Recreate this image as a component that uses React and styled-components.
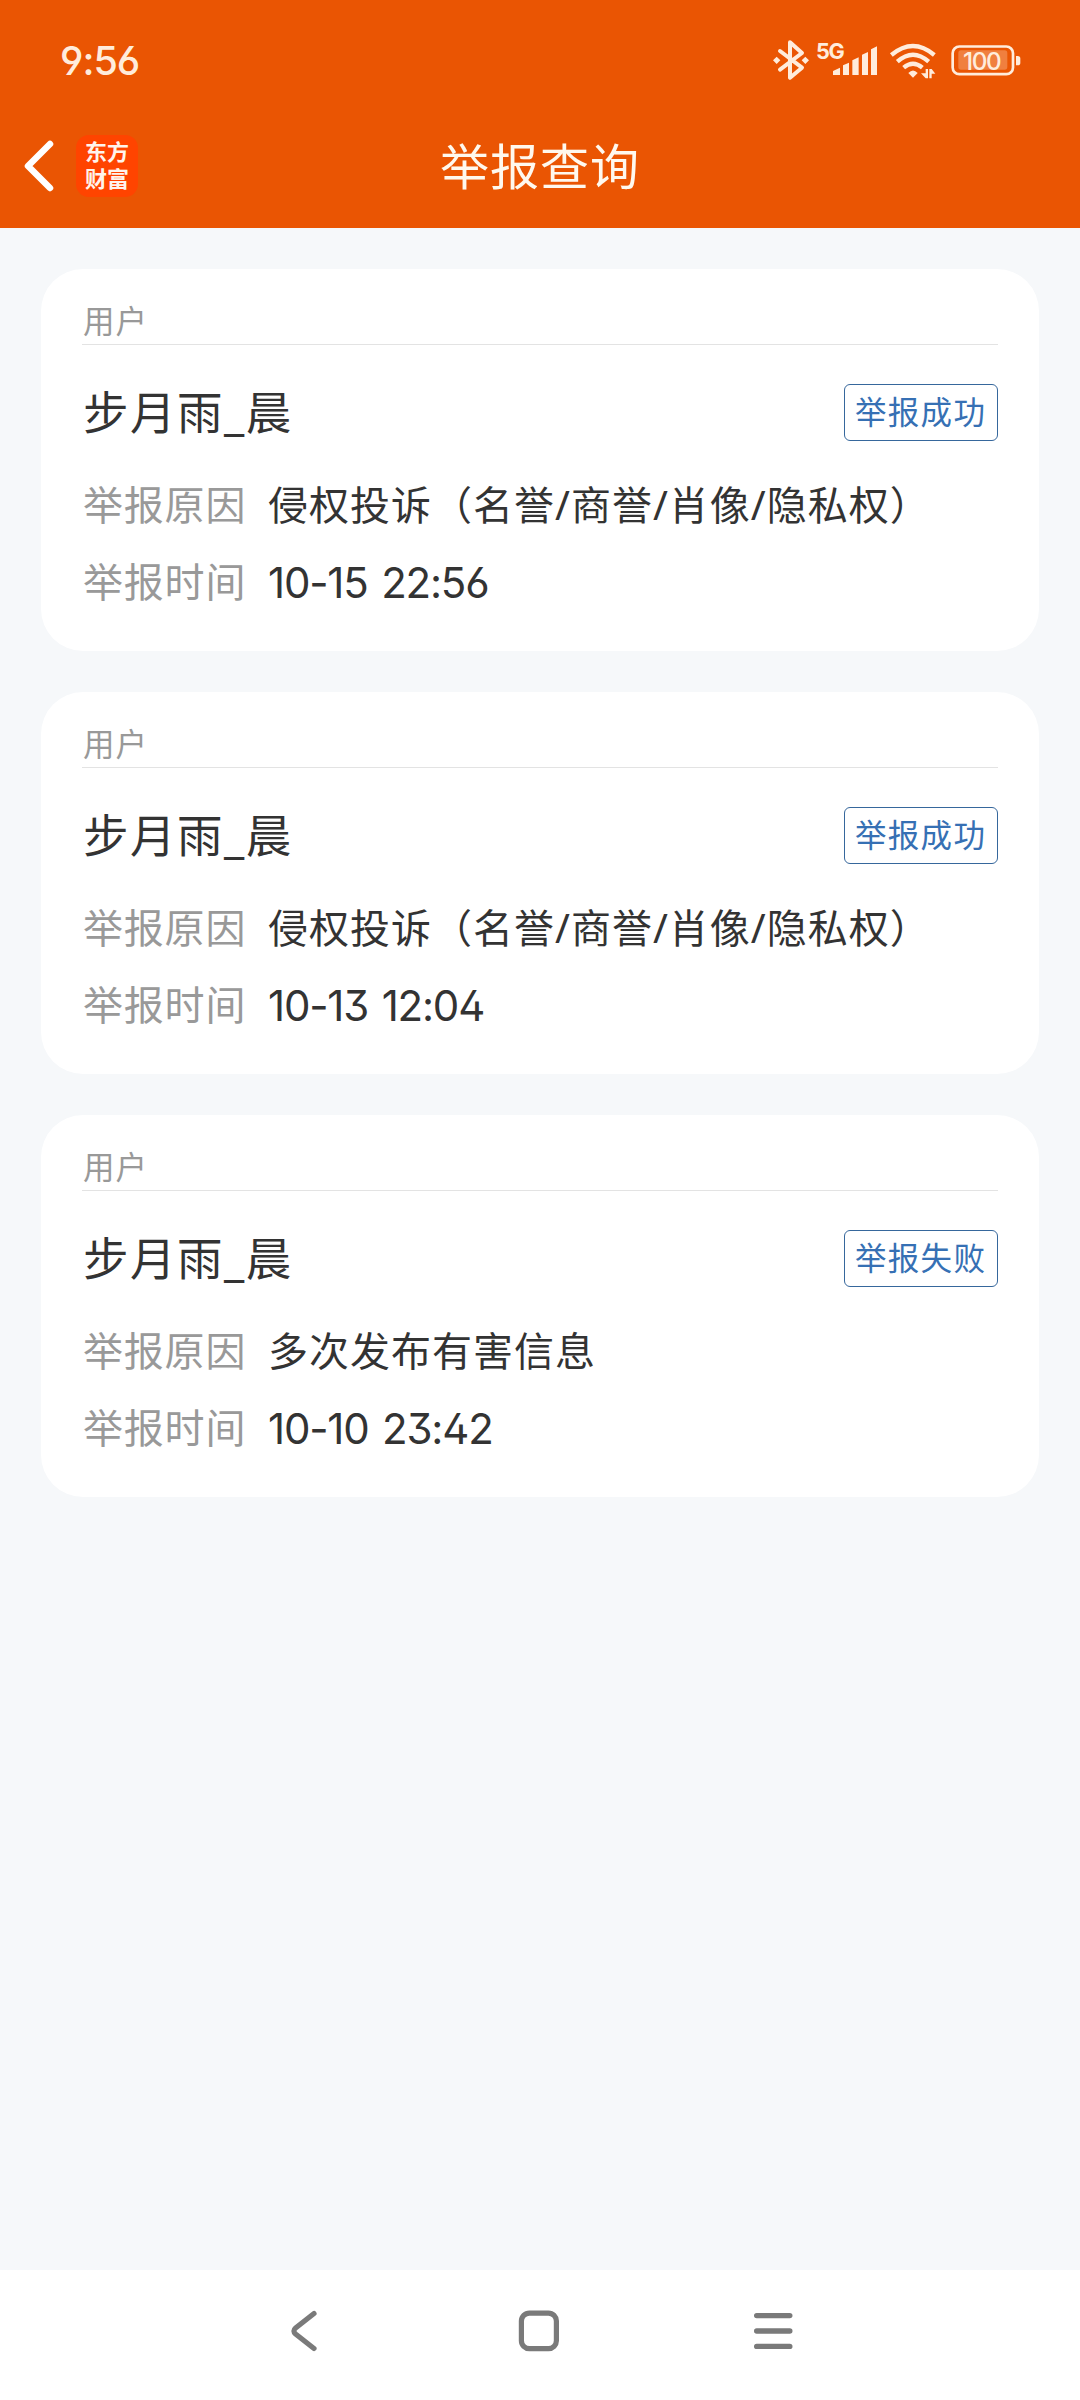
import styled, { createGlobalStyle } from "styled-components";

const GlobalStyle = createGlobalStyle`
  * {
    box-sizing: border-box;
  }
  body {
    margin: 0;
    background: #f6f8fa;
    font-family: "Noto Sans", "Noto Sans CJK SC", sans-serif;
  }
`;

const Page = styled.div`
  display: flex;
  flex-direction: column;
  width: 1080px;
  height: 2400px;
  background: #f6f8fa;
`;

const Header = styled.header`
  background: #ea5503;
  color: #fff8ee;
`;

const StatusBar = styled.div`
  display: flex;
  align-items: center;
  height: 104px;
  padding: 16px 58px 0 60px;
  color: #ffecdc;
`;

const Clock = styled.span`
  padding-top: 1px;
  font-family: Inter, sans-serif;
  font-size: 39.5px;
  font-weight: 500;
  font-feature-settings: "ss01";
  line-height: 48px;
  letter-spacing: -1px;
`;

const StatusIcons = styled.div`
  display: flex;
  align-items: center;
  margin-left: auto;
  height: 50px;

  svg {
    display: block;
    overflow: visible;
  }
`;

const TitleBar = styled.div`
  display: grid;
  grid-template-columns: 1fr auto 1fr;
  align-items: center;
  height: 124px;
  padding: 0 23px;
`;

const TitleLeft = styled.div`
  display: flex;
  align-items: center;
  gap: 21px;
`;

const Title = styled.h1`
  margin: 0;
  padding-bottom: 4px;
  font-family: "Noto Sans CJK SC", sans-serif;
  font-size: 49px;
  font-weight: 400;
  line-height: 60px;
  letter-spacing: 1px;
`;

const Logo = styled.div`
  display: flex;
  flex-direction: column;
  align-items: center;
  justify-content: center;
  width: 62px;
  height: 62px;
  padding-bottom: 5px;
  border-radius: 13px;
  background: #ff4400;
  color: #fff4ec;
  font-family: "Noto Sans CJK SC", sans-serif;
  font-size: 22px;
  font-weight: 700;
  line-height: 27px;
`;

const List = styled.main`
  display: flex;
  flex: 1;
  flex-direction: column;
  gap: 41px;
  padding: 41px;
`;

const Card = styled.section`
  height: 382px;
  padding: 31px 41px 0;
  border-radius: 42px;
  background: #fff;
`;

const CardType = styled.div`
  height: 45px;
  padding: 1px 0 0 1px;
  border-bottom: 1px solid #e3e3e3;
  color: #999;
  font-size: 31.5px;
  line-height: 40px;
  letter-spacing: 1px;
`;

const CardHead = styled.div`
  display: flex;
  align-items: center;
  justify-content: space-between;
  height: 57px;
  margin: 39px 0 34px;
`;

const UserName = styled.span`
  padding-left: 1px;
  color: #333;
  font-size: 45.5px;
  line-height: 57px;
  letter-spacing: 1.5px;
`;

const Badge = styled.span`
  width: 154px;
  height: 57px;
  padding-left: 10px;
  border: 1px solid #36679c;
  border-radius: 6px;
  color: #3670b4;
  font-size: 31.5px;
  line-height: 54px;
  letter-spacing: 1.3px;
  white-space: nowrap;
`;

const Row = styled.div`
  display: flex;
  align-items: center;
  height: 60px;
  margin-bottom: 17px;
  font-size: 40px;
  line-height: 60px;
  letter-spacing: 1px;
  white-space: nowrap;
`;

const Label = styled.span`
  width: 186px;
  padding-left: 1px;
  color: #999;
  letter-spacing: 0.8px;
`;

const Reason = styled.span`
  color: #333;
`;

const Time = styled.span`
  padding-top: 2px;
  color: #333;
  font-family: Inter, sans-serif;
  font-size: 42px;
  font-feature-settings: "ss01";
  letter-spacing: -1.2px;
  word-spacing: 3px;
`;

const NavBar = styled.nav`
  display: flex;
  align-items: flex-start;
  justify-content: space-between;
  height: 130px;
  padding: 38px 285px 0 289px;
  background: #fff;
`;

const BluetoothIcon = () => (
  <svg width="38" height="42" viewBox="66 56 114 126" fill="none" stroke="currentColor">
    <path
      d="M90 92 L156 142 L120 172 V66 L156 98 L90 148"
      strokeWidth="12"
      strokeLinecap="round"
      strokeLinejoin="round"
    />
    <path d="M80 109 L91 120 L80 131 L69 120Z M166 109 L177 120 L166 131 L155 120Z" fill="currentColor" stroke="none" />
  </svg>
);

const SignalIcon = styled(({ className }) => (
  <svg className={className} width="64" height="42" viewBox="195 56 192 126" fill="currentColor">
    <text x="198" y="115" fontFamily="Inter" fontSize="65" fontWeight="700" letterSpacing="-4">
      5G
    </text>
    <path d="M249 152 L270 142 V164 H249Z M279 135 L297 127 V164 H279Z M307 120 L326 111 V164 H307Z M336 103 L354 95 V164 H336Z M363 87 L381 78 V164 H363Z" />
  </svg>
))`
  margin: 0 10px 0 5px;
`;

const WifiIcon = () => (
  <svg width="48" height="42" viewBox="417 56 144 126" fill="none" stroke="currentColor" strokeWidth="13">
    <path d="M424 104 Q489 50 553 104" />
    <path d="M442 124 Q489 82 536 124" />
    <path d="M461 142 Q489 118 517 142" />
    <path d="M475 158 Q489 143 503 158 L489 172Z" fill="currentColor" stroke="none" />
    <path d="M527 146 H534 V174 H527 L513 159 H527Z M538 174 V146 H545 L556 160 H545 V174Z" fill="currentColor" stroke="none" />
  </svg>
);

const BatteryIcon = styled(({ className }) => (
  <svg className={className} width="72" height="42" viewBox="599 56 216 126" fill="none">
    <rect x="607" y="78.5" width="181" height="83" rx="20" stroke="currentColor" strokeWidth="8" />
    <rect x="624" y="90" width="147" height="58" rx="8" fill="currentColor" opacity="0.28" />
    <text
      x="694"
      y="148"
      textAnchor="middle"
      fontFamily="Inter"
      fontSize="73"
      fontWeight="500"
      fill="currentColor"
      letterSpacing="-4"
    >
      100
    </text>
    <path d="M797 107 H802 Q810 107 810 115 V127 Q810 135 802 135 H797Z" fill="currentColor" />
  </svg>
))`
  margin-left: 13px;
`;

const ChevronIcon = () => (
  <svg width="32" height="54" viewBox="0 0 32 54" fill="none" stroke="#fff" strokeWidth="6.5">
    <path d="M27 5 L5 27 L27 49" strokeLinecap="round" strokeLinejoin="round" />
  </svg>
);

const NavBackIcon = () => (
  <svg width="37" height="46" viewBox="0 0 37 46" fill="none" stroke="#7a7a7a" strokeWidth="5.2">
    <path d="M25 5.5 L6.6 20 Q3.2 23 6.6 26 L25 40.5" strokeLinecap="round" />
  </svg>
);

const NavHomeIcon = () => (
  <svg width="46" height="46" viewBox="0 0 46 46" fill="none" stroke="#7a7a7a" strokeWidth="5.2">
    <rect x="5.4" y="5.1" width="35" height="35.6" rx="8" />
  </svg>
);

const NavMenuIcon = () => (
  <svg width="44" height="46" viewBox="0 0 44 46" fill="none" stroke="#7a7a7a" strokeWidth="5.4">
    <path d="M5.7 7.6 H38.8 M5.7 23 H38.8 M5.7 38.4 H38.8" strokeLinecap="round" />
  </svg>
);

const reports = [
  { id: 1, user: "步月雨_晨", status: "举报成功", reason: "侵权投诉（名誉/商誉/肖像/隐私权）", time: "10-15 22:56" },
  { id: 2, user: "步月雨_晨", status: "举报成功", reason: "侵权投诉（名誉/商誉/肖像/隐私权）", time: "10-13 12:04" },
  { id: 3, user: "步月雨_晨", status: "举报失败", reason: "多次发布有害信息", time: "10-10 23:42" },
];

const ReportCard = ({ report }) => (
  <Card>
    <CardType>用户</CardType>
    <CardHead>
      <UserName>{report.user}</UserName>
      <Badge>{report.status}</Badge>
    </CardHead>
    <Row>
      <Label>举报原因</Label>
      <Reason>{report.reason}</Reason>
    </Row>
    <Row>
      <Label>举报时间</Label>
      <Time>{report.time}</Time>
    </Row>
  </Card>
);

const App = () => {
  return (
    <Page>
      <GlobalStyle />
      <Header>
        <StatusBar>
          <Clock>9:56</Clock>
          <StatusIcons>
            <BluetoothIcon />
            <SignalIcon />
            <WifiIcon />
            <BatteryIcon />
          </StatusIcons>
        </StatusBar>
        <TitleBar>
          <TitleLeft>
            <ChevronIcon />
            <Logo>
              <span>东方</span>
              <span>财富</span>
            </Logo>
          </TitleLeft>
          <Title>举报查询</Title>
        </TitleBar>
      </Header>
      <List>
        {reports.map((report) => (
          <ReportCard key={report.id} report={report} />
        ))}
      </List>
      <NavBar>
        <NavBackIcon />
        <NavHomeIcon />
        <NavMenuIcon />
      </NavBar>
    </Page>
  );
};

export default App;
